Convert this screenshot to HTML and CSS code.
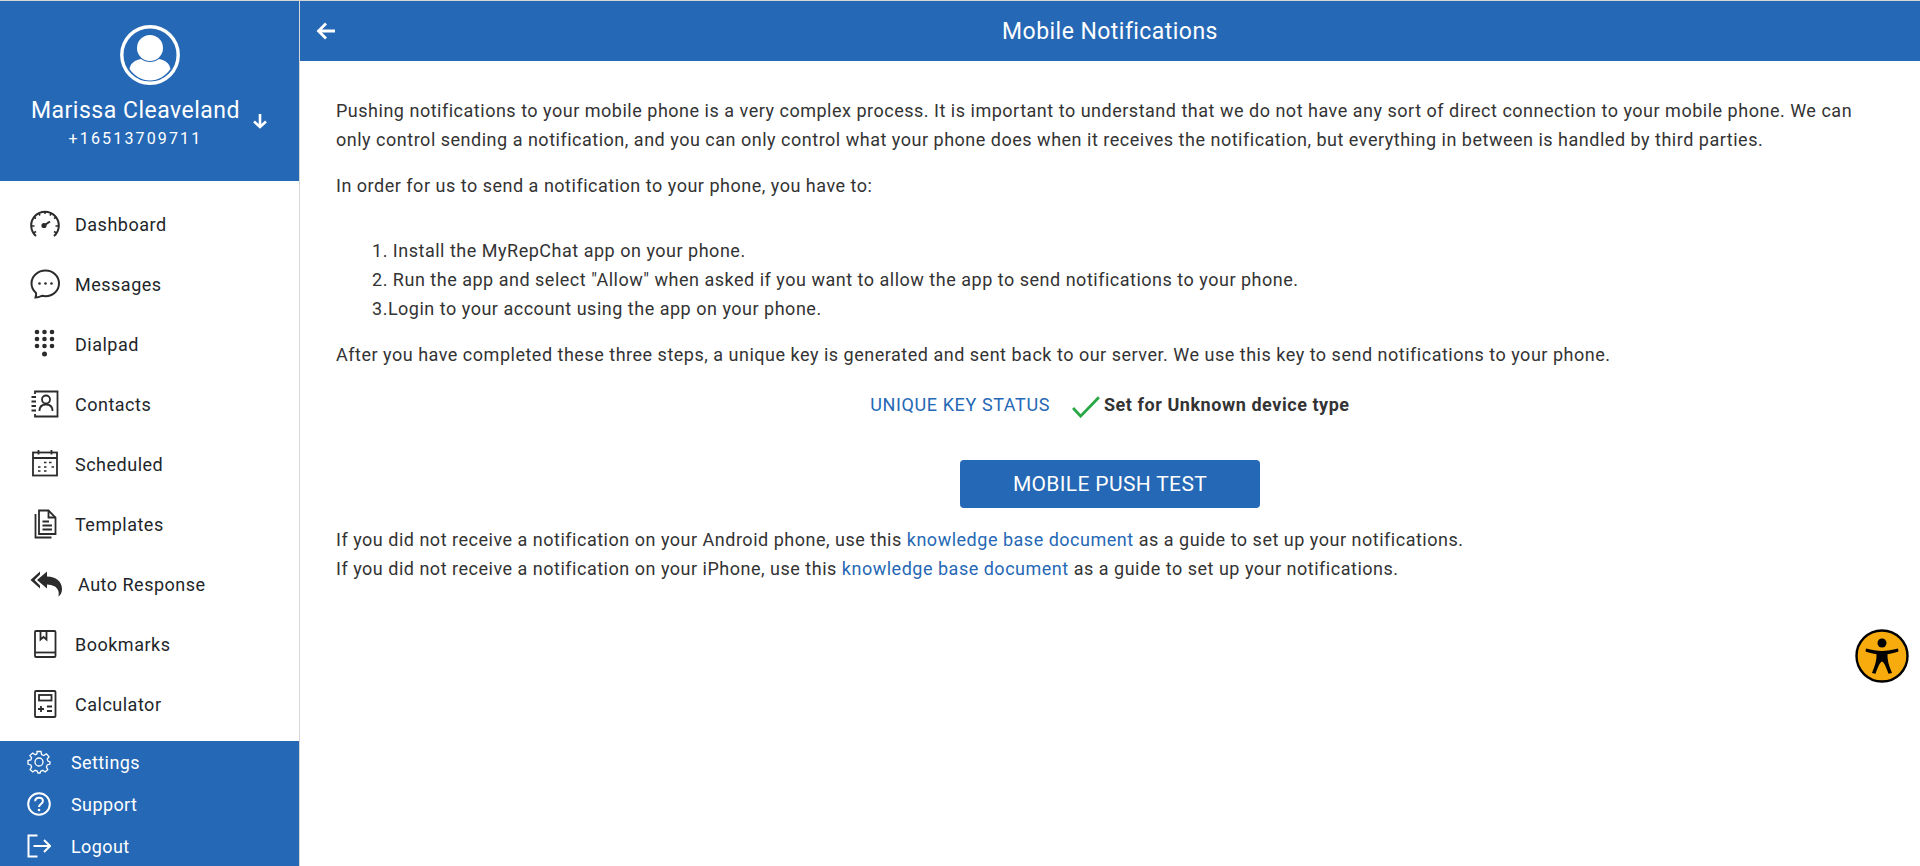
FILE: index.html
```html
<!DOCTYPE html>
<html lang="en">
<head>
<meta charset="utf-8">
<title>Mobile Notifications</title>
<link rel="stylesheet" href="styles.css">
</head>
<body>
<div class="app">
  <aside class="sidebar">
    <header class="profile">
      <svg class="avatar" viewBox="0 0 60 60"><circle cx="30" cy="30" r="28.2" fill="none" stroke="#fff" stroke-width="3.4"/><circle cx="30" cy="23" r="13" fill="#fff"/><path d="M9.5 44C10.5 38 15 35 21 34C26 38 34 38 39 34C45 35 49.5 38 50.5 44C45.5 51 38 55.5 30 55.5C22 55.5 14.5 51 9.5 44Z" fill="#fff"/></svg>
      <div class="profile-row">
        <div class="profile-text">
          <div class="profile-name">Marissa Cleaveland</div>
          <div class="profile-phone">+16513709711</div>
        </div>
        <svg class="profile-arrow" viewBox="0 0 16 16"><path d="M8 1V14M2 8.500L8 14L14 8.500" fill="none" stroke="#fff" stroke-width="2.600"/></svg>
      </div>
    </header>
    <nav class="nav">
      <a class="nav-item"><svg class="nav-icon" viewBox="0 0 30 30" fill="none" stroke="#2b2b2b" stroke-width="2"><path d="M6 27A13.8 13.8 0 1 1 24 27"/><path d="M15 2V5M3.5 8L6 9.5M26.5 8L24 9.5M1.5 17H4.500M28.500 17H25.500M3.500 24L6 22.500M26.500 24L24 22.500M8.500 4L10 6.500M21.500 4L20 6.500" stroke-width="1.600"/><path d="M14 16.500L20 12.500" stroke-width="2"/><circle cx="14" cy="16.500" r="1.600" fill="#2b2b2b"/></svg><span>Dashboard</span></a>
      <a class="nav-item"><svg class="nav-icon" viewBox="0 0 30 30" fill="none" stroke="#2b2b2b" stroke-width="2"><path d="M15.500 1.500C8 1.500 1.500 7 1.500 14.500C1.500 18.500 3.200 21.500 6 24C6.500 25.500 6 27 5.500 28.500C8.500 28.500 10.500 27.500 12 26.800C13 27 14.500 27.200 15.500 27.200C23 27.200 29 21.500 29 14.500C29 7 23 1.500 15.500 1.500Z"/><circle cx="9.500" cy="14.500" r="1.300" fill="#2b2b2b" stroke="none"/><circle cx="15.500" cy="14.500" r="1.300" fill="#2b2b2b" stroke="none"/><circle cx="21.500" cy="14.500" r="1.300" fill="#2b2b2b" stroke="none"/></svg><span>Messages</span></a>
      <a class="nav-item"><svg class="nav-icon" viewBox="0 0 30 30" fill="#2b2b2b"><circle cx="7" cy="3" r="2.300"/><circle cx="14.500" cy="3" r="2.300"/><circle cx="22" cy="3" r="2.300"/><circle cx="7" cy="10" r="2.300"/><circle cx="14.500" cy="10" r="2.300"/><circle cx="22" cy="10" r="2.300"/><circle cx="7" cy="17" r="2.300"/><circle cx="14.500" cy="17" r="2.300"/><circle cx="22" cy="17" r="2.300"/><circle cx="14.500" cy="25" r="2.500"/></svg><span>Dialpad</span></a>
      <a class="nav-item"><svg class="nav-icon" viewBox="0 0 30 30" fill="none" stroke="#2b2b2b" stroke-width="1.800"><path d="M5 5V2.500H27.500V27.500H5V25"/><path d="M1.500 8H6M1.500 12.500H6M1.500 17H6M1.500 21.500H6"/><circle cx="16" cy="10.500" r="4"/><path d="M9.500 22C9.500 17 13 15.500 16 15.500C19 15.500 22.500 17 22.500 22"/></svg><span>Contacts</span></a>
      <a class="nav-item"><svg class="nav-icon" viewBox="0 0 30 30" fill="none" stroke="#2b2b2b" stroke-width="1.800"><rect x="3" y="3.500" width="24" height="23"/><path d="M3 9H27M8.500 1V5.500M21.500 1V5.500"/><path d="M14 13.500H16.500M19 13.500H21.500M21.500 18H24M8 18H10.500M14 18H16.500M8 22H10.500M14 22H16.500" stroke-width="1.400"/></svg><span>Scheduled</span></a>
      <a class="nav-item"><svg class="nav-icon" viewBox="0 0 30 30" fill="none" stroke="#2b2b2b" stroke-width="1.800"><path d="M9 1.500H18.500L25.500 8.500V25H9Z"/><path d="M18.500 1.500V8.500H25.500"/><path d="M5.500 5V28.500H21.500"/><path d="M12.500 12.500H19M12.500 16.500H22M12.500 20.500H22"/></svg><span>Templates</span></a>
      <a class="nav-item nav-item-auto"><svg class="nav-icon nav-icon-auto" viewBox="0 0 34 26" fill="#2b2b2b"><path d="M0.500 9L10 0.500V3.500L4.500 9L10 14.500V17.500Z"/><path d="M7 9L17 0.500V5.500C26 5.500 32 10.500 32 18C32 21 31 24 28.500 25.500C29.500 21 28.500 14 17 13.500V17.500Z"/></svg><span>Auto Response</span></a>
      <a class="nav-item"><svg class="nav-icon" viewBox="0 0 30 30" fill="none" stroke="#2b2b2b" stroke-width="1.800"><rect x="5" y="2" width="20.500" height="26" rx="1"/><path d="M5 23.500H25.500"/><path d="M10.500 2V10.500L13.500 8L16.500 10.500V2"/></svg><span>Bookmarks</span></a>
      <a class="nav-item"><svg class="nav-icon" viewBox="0 0 30 30" fill="none" stroke="#2b2b2b" stroke-width="1.800"><rect x="5" y="2" width="20.500" height="26" rx="1"/><rect x="9" y="6" width="12.500" height="5.500"/><path d="M8 20H14M11 17V23"/><path d="M17 17.500H22M17 22H22"/></svg><span>Calculator</span></a>
    </nav>
    <footer class="side-footer">
      <a class="foot-item"><svg class="foot-icon" viewBox="0 0 24 24" fill="none" stroke="#fff" stroke-width="1.300"><circle cx="12" cy="12" r="4"/><path d="M10 1.500H14L14.600 4.600L16.800 5.500L19.400 3.800L22 6.700L20.200 9.200L21.100 11.200L23 12L22.900 14L20.200 14.900L19.400 17L20.800 19.600L18.100 22L15.800 20.300L13.700 21.200L13 23H11L10.200 21.100L8.100 20.300L5.800 22L3.100 19.600L4.600 17L3.800 14.900L1 14V10.500L3.800 9.900L4.600 7.900L2.900 5.500L5.700 3L8.200 4.700L10 3.900Z"/></svg><span>Settings</span></a>
      <a class="foot-item"><svg class="foot-icon" viewBox="0 0 24 24" fill="none" stroke="#fff" stroke-width="2"><circle cx="12" cy="12" r="10.800"/><path d="M8.200 9.300C8.200 7 10 5.800 12 5.800C14.200 5.800 15.900 7.100 15.900 9.100C15.900 12 12 12 12 15"/><circle cx="12" cy="18" r="1.300" fill="#fff" stroke="none"/></svg><span>Support</span></a>
      <a class="foot-item"><svg class="foot-icon" viewBox="0 0 24 24" fill="none" stroke="#fff" stroke-width="2"><path d="M10.500 1.500H1.500V22.500H10.500"/><path d="M6.500 12H23M17 6L23 12L17 18"/></svg><span>Logout</span></a>
    </footer>
  </aside>
  <main class="main">
    <header class="topbar">
      <svg class="back" viewBox="0 0 20 20"><path d="M19 10H2.500M10 2.500L2.500 10L10 17.500" fill="none" stroke="#fff" stroke-width="2.800"/></svg>
      <h1 class="title">Mobile Notifications</h1>
    </header>
    <section class="content">
      <p class="para">Pushing notifications to your mobile phone is a very complex process. It is important to understand that we do not have any sort of direct connection to your mobile phone. We can only control sending a notification, and you can only control what your phone does when it receives the notification, but everything in between is handled by third parties.</p>
      <p class="para">In order for us to send a notification to your phone, you have to:</p>
      <div class="steps">
        <div>1. Install the MyRepChat app on your phone.</div>
        <div>2. Run the app and select "Allow" when asked if you want to allow the app to send notifications to your phone.</div>
        <div>3.Login to your account using the app on your phone.</div>
      </div>
      <p class="para">After you have completed these three steps, a unique key is generated and sent back to our server. We use this key to send notifications to your phone.</p>
      <div class="status">
        <span class="status-label">UNIQUE KEY STATUS</span>
        <svg class="check" viewBox="0 0 26 20"><path d="M1 11L8 18.500L25 1" fill="none" stroke="#28a745" stroke-width="2.600"/></svg>
        <strong class="status-value">Set for Unknown device type</strong>
      </div>
      <div class="action"><button class="push-btn">MOBILE PUSH TEST</button></div>
      <div class="notes">
        <div>If you did not receive a notification on your Android phone, use this <a class="link">knowledge base document</a> as a guide to set up your notifications.</div>
        <div>If you did not receive a notification on your iPhone, use this <a class="link">knowledge base document</a> as a guide to set up your notifications.</div>
      </div>
    </section>
  </main>
</div>
<div class="a11y"><svg viewBox="0 0 54 54"><circle cx="27" cy="27" r="25.500" fill="#f8ab0c" stroke="#000" stroke-width="2.400"/><circle cx="27" cy="14" r="4.500" fill="#000"/><path d="M11 19.500C17 21 22 22 27 22C32 22 37 21 43 19.500L43.500 22.500C39 24 35.500 24.800 32.500 25.200C32.500 31 33 34 37 44L33.500 44.800C31 38 29 33 27 32.500C25 33 23 38 20.500 44.800L17 44C21 34 21.500 31 21.500 25.200C18.500 24.800 15 24 10.500 22.500Z" fill="#000"/></svg></div>
</body>
</html>
```
FILE: styles.css
```css
* { box-sizing: border-box; }
html, body { margin: 0; height: 100%; overflow: hidden; }
body { font-family: Roboto, "Liberation Sans", sans-serif; font-size: 18px; letter-spacing: .51px; color: #333; background: #fff; }
.app { display: flex; height: 866px; border-top: 1px solid #d6d6d6; }
.sidebar { width: 300px; flex: none; display: flex; flex-direction: column; border-right: 1px solid #d6d6d6; }
.profile { height: 180px; flex: none; background: #2568b5; color: #fff; display: flex; flex-direction: column; align-items: center; padding-top: 24px; }
.avatar { width: 60px; height: 60px; display: block; }
.profile-row { display: flex; align-items: flex-start; margin-top: 10px; }
.profile-text { text-align: center; }
.profile-name { font-size: 23px; line-height: 32px; letter-spacing: .5px; white-space: nowrap; }
.profile-phone { font-size: 16px; line-height: 23px; letter-spacing: 2.150px; }
.profile-arrow { width: 16px; height: 16px; margin: 18px 0 0 12px; }
.nav { flex: 1; padding-top: 13px; }
.nav-item { height: 60px; display: flex; align-items: center; gap: 15px; padding-left: 30px; color: #212529; letter-spacing: .5px; }
.nav-icon { width: 30px; height: 30px; flex: none; }
.nav-icon-auto { width: 34px; height: 26px; }
.nav-item-auto { gap: 14px; }
.side-footer { height: 125px; flex: none; background: #2568b5; }
.foot-item { height: 42px; display: flex; align-items: center; gap: 20px; padding-left: 27px; color: #fff; letter-spacing: .4px; }
.foot-icon { width: 24px; height: 24px; flex: none; }
.main { flex: 1; min-width: 0; display: flex; flex-direction: column; }
.topbar { height: 60px; flex: none; background: #2568b5; color: #fff; display: flex; align-items: center; justify-content: center; position: relative; }
.back { width: 22px; height: 20px; position: absolute; left: 15px; top: 20px; }
.title { margin: 0; font-size: 23px; font-weight: 400; letter-spacing: .45px; }
.content { padding: 36px 36px 0; line-height: 28.800px; }
.para { margin: 0 0 17px; }
.steps { padding: 20px 0 0 36px; margin-bottom: 17px; }
.status { display: flex; align-items: center; justify-content: center; margin-top: 21px; }
.check { width: 28px; height: 22px; margin: 4px 4px 0 22px; }
.status-label { color: #2568b5; letter-spacing: .6px; }
.status-value { font-weight: 700; letter-spacing: .55px; }
.action { display: flex; justify-content: center; margin-top: 41px; }
.push-btn { width: 300px; height: 48px; background: #2568b5; color: #fff; border: 0; border-radius: 4px; font-family: inherit; font-size: 21px; letter-spacing: .35px; }
.notes { margin-top: 18px; }
.link { color: #2568b5; }
.a11y { position: fixed; left: 1855px; top: 629px; width: 54px; height: 54px; }
.a11y svg { display: block; width: 54px; height: 54px; }
```
